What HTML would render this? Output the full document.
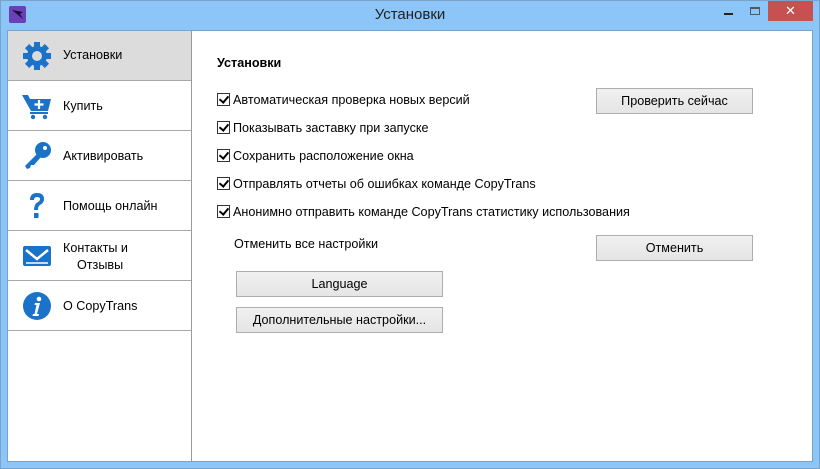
<!DOCTYPE html>
<html><head><meta charset="utf-8"><style>
*{margin:0;padding:0;box-sizing:border-box}
body{width:820px;height:469px;background:#8cc6f8;font-family:"Liberation Sans","DejaVu Sans",sans-serif;font-size:12.6px;color:#000;position:relative;overflow:hidden}
.outer{position:absolute;left:0;top:0;width:820px;height:469px;border:1px solid #7aa3c9}
.title{position:absolute;top:6px;left:0;width:820px;text-align:center;font-size:15px;color:#222}
.client{position:absolute;left:7px;top:30px;width:806px;height:432px;background:#fff;border:1px solid #7aa3c9}
.side{position:absolute;left:0;top:0;width:184px;height:430px;border-right:1px solid #9a9a9a}
.item{position:absolute;left:0;width:183px;height:50px;border-bottom:1px solid #a8a8a8}
.item span{position:absolute;left:55px}
.item svg{position:absolute;left:14px;top:10px}
.cb{position:absolute;left:209px}
.cb i{display:inline-block;width:13px;height:13px;border:1px solid #333;vertical-align:-2px;margin-right:3px;position:relative;background:#fff}
.cb i:after{content:"";position:absolute;left:3px;top:0px;width:4px;height:7px;border:solid #000;border-width:0 2px 2px 0;transform:rotate(40deg)}
.btn{position:absolute;height:26px;border:1px solid #adadad;background:linear-gradient(#f0f0f0,#e5e5e5);text-align:center;line-height:24px}
</style></head><body>
<div class="outer"></div>
<svg style="position:absolute;left:9px;top:6px" width="17" height="17"><rect width="17" height="17" rx="2" fill="#6a3fb8"/><path d="M3 4 L14 13 L11 8 L14 6 Z" fill="#1a0b3a"/></svg>
<div class="title">Установки</div>
<div style="position:absolute;left:724px;top:13px;width:9px;height:2px;background:#222"></div>
<div style="position:absolute;left:750px;top:7px;width:10px;height:8px;border:1px solid #4a5a6a;border-top-width:2px"></div>
<div style="position:absolute;left:768px;top:1px;width:45px;height:20px;background:#c75050;color:#fff;text-align:center;font-weight:bold;font-size:13px;line-height:20px">✕</div>
<div class="client">
<div class="side">
<div class="item" style="top:0;background:#dcdcdc"><svg width="30" height="30" viewBox="0 0 30 30"><g fill="#1a72c9"><circle cx="15" cy="15" r="10"/><g id="t"><rect x="12" y="1" width="6" height="6"/><rect x="12" y="23" width="6" height="6"/><rect x="1" y="12" width="6" height="6"/><rect x="23" y="12" width="6" height="6"/></g><use href="#t" transform="rotate(45 15 15)"/></g><circle cx="15" cy="15" r="5" fill="#dcdcdc"/></svg><span style="top:17px">Установки</span></div>
<div class="item" style="top:50px"><svg width="30" height="30" viewBox="0 0 30 30"><path d="M0 4 H6 L8 8 H29 L26 20 H9 Z" fill="#1a72c9"/><rect x="8" y="21" width="18" height="2" fill="#1a72c9"/><circle cx="11" cy="26" r="2.2" fill="#1a72c9"/><circle cx="23" cy="26" r="2.2" fill="#1a72c9"/><path d="M17 9 v9 M12.5 13.5 h9" stroke="#fff" stroke-width="2.2"/></svg><span style="top:18px">Купить</span></div>
<div class="item" style="top:100px"><svg width="30" height="30" viewBox="0 0 30 30"><circle cx="21" cy="9" r="8" fill="#1a72c9"/><path d="M16 12 L3 25 L5 28 L8 27 L9 24 L12 24 L19 16 Z" fill="#1a72c9"/><circle cx="23" cy="7" r="2" fill="#fff"/></svg><span style="top:18px">Активировать</span></div>
<div class="item" style="top:150px"><svg width="30" height="30" viewBox="0 0 30 30"><path d="M8 9 Q8 2 15 2 Q22 2 22 8 Q22 12 18 14 Q16 15 16 19 H12 Q12 13 16 11 Q18 10 18 8 Q18 6 15 6 Q12 6 12 9 Z" fill="#1a72c9"/><rect x="12" y="22" width="4.5" height="5" fill="#1a72c9"/></svg><span style="top:18px">Помощь онлайн</span></div>
<div class="item" style="top:200px"><svg width="30" height="30" viewBox="0 0 30 30"><rect x="1" y="5" width="28" height="20" rx="2" fill="#1a72c9"/><path d="M4 9 L15 18 L26 9" stroke="#fff" stroke-width="2.5" fill="none"/><path d="M4 22 H26" stroke="#fff" stroke-width="1.5"/></svg><span style="top:9px;line-height:17px">Контакты и<br>&nbsp;&nbsp;&nbsp;&nbsp;Отзывы</span></div>
<div class="item" style="top:250px"><svg width="30" height="30" viewBox="0 0 30 30"><circle cx="15" cy="15" r="14" fill="#1a72c9"/><circle cx="17" cy="8" r="2.3" fill="#fff"/><path d="M13 12 H18 L15 23 H17 L16.5 25 H10.5 L11 23 H12.5 L14.5 14 H12.5 Z" fill="#fff"/></svg><span style="top:18px">О CopyTrans</span></div>
</div>
<div style="position:absolute;left:209px;top:25px;font-weight:bold">Установки</div>
<div class="cb" style="top:62px"><i></i>Автоматическая проверка новых версий</div>
<div class="cb" style="top:90px"><i></i>Показывать заставку при запуске</div>
<div class="cb" style="top:118px"><i></i>Сохранить расположение окна</div>
<div class="cb" style="top:146px"><i></i>Отправлять отчеты об ошибках команде CopyTrans</div>
<div class="cb" style="top:174px"><i></i>Анонимно отправить команде CopyTrans статистику использования</div>
<div style="position:absolute;left:226px;top:206px">Отменить все настройки</div>
<div class="btn" style="left:588px;top:57px;width:157px">Проверить сейчас</div>
<div class="btn" style="left:588px;top:204px;width:157px">Отменить</div>
<div class="btn" style="left:228px;top:240px;width:207px">Language</div>
<div class="btn" style="left:228px;top:276px;width:207px">Дополнительные настройки...</div>
</div>
</body></html>
